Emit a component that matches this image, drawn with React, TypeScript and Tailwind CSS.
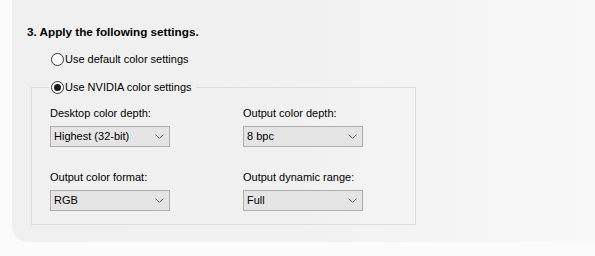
import React from "react";

function Radio({ checked }: { checked?: boolean }) {
  return (
    <span className="w-[13px] h-[13px] rounded-full border border-[#333333] bg-white flex items-center justify-center shrink-0">
      {checked && <span className="w-[7px] h-[7px] rounded-full bg-[#1a1a1a]" />}
    </span>
  );
}

function Select({ value }: { value: string }) {
  return (
    <div className="w-[120px] h-[21px] border border-[#adadad] bg-[#e5e5e5] flex items-center justify-between pl-[3px] pr-[5px]">
      <span className="text-[11px] leading-none text-black">{value}</span>
      <svg width="9" height="5" viewBox="0 0 9 5" className="block">
        <path d="M0.5 0.5 L4.5 4.5 L8.5 0.5" fill="none" stroke="#666666" strokeWidth="1" />
      </svg>
    </div>
  );
}

function Field({ label, value }: { label: string; value: string }) {
  return (
    <div className="flex flex-col">
      <span className="text-[11px] leading-[16px] text-black h-[16px] whitespace-nowrap">{label}</span>
      <div className="mt-[5px]">
        <Select value={value} />
      </div>
    </div>
  );
}

export default function App() {
  return (
    <div className="w-[595px] h-[256px] bg-[#fbfbfb] pl-[12px] font-['Liberation_Sans',Arial,sans-serif] overflow-hidden">
      <div className="h-[242px] rounded-bl-[16px] bg-gradient-to-r from-[#f0f0f0] via-[#f1f1f1] to-[#f8f8f8] pl-[15px] pt-[24px]">
        <div className="text-[11.7px] leading-[16px] font-bold text-black">3. Apply the following settings.</div>
        <div className="ml-[24px] mt-[11px] flex items-center gap-[1px] h-[16px]">
          <Radio />
          <span className="text-[11px] leading-[16px] text-black">Use default color settings</span>
        </div>
        <fieldset className="ml-[4px] mt-[12px] w-[385px] h-[146px] border border-[#dcdcdc] px-[17px] pt-[10px]">
          <legend className="px-[2px] flex items-center gap-[1px] h-[16px]">
            <Radio checked />
            <span className="text-[11px] leading-[16px] text-black pr-[2px]">Use NVIDIA color settings</span>
          </legend>
          <div className="grid grid-cols-[120px_120px] gap-x-[73px] gap-y-[22px] ml-[1px]">
            <Field label="Desktop color depth:" value="Highest (32-bit)" />
            <Field label="Output color depth:" value="8 bpc" />
            <Field label="Output color format:" value="RGB" />
            <Field label="Output dynamic range:" value="Full" />
          </div>
        </fieldset>
      </div>
    </div>
  );
}
